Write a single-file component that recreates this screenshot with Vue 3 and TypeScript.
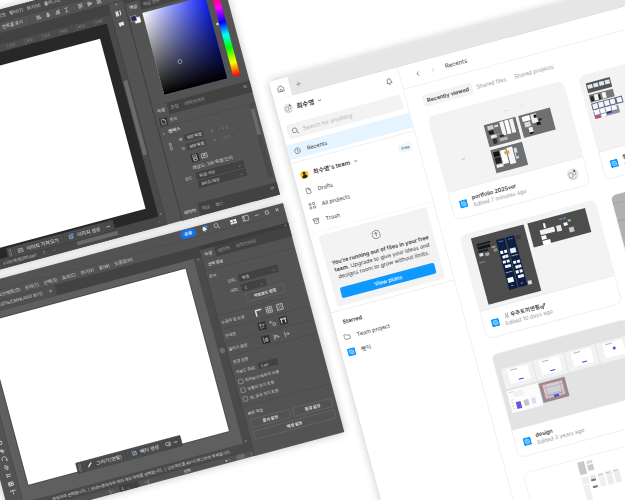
<script setup lang="ts">
import { ref } from 'vue'

interface Rect { x: number; y: number; w: number; h: number; f: string }
interface FileCard { title: string; edited: string; kind: string; bg: string; avatar: boolean }

const r = (x: number, y: number, w: number, h: number, f: string): Rect => ({ x, y, w, h, f })

const psMenus = ['선택(S)', '필터(T)', '보기(V)', '플러그인', '창(W)', '도움말(H)']
const aiMenus = ['오브젝트(O)', '문자(T)', '선택(S)', '효과(C)', '보기(V)', '창(W)', '도움말(H)']
const rulerMarks = [250, 300, 350, 400, 450, 500]
const alignIcons = ['M2 1v10M4 3h4v2H4zM4 7h6v2H4z', 'M6 1v10M4 3h4v2H4zM3 7h6v2H3z', 'M10 1v10M5 3h4v2H5zM3 7h6v2H3z', 'M3 2h6M6 2v8M3 10h6', 'M1 2h10M3 4v6h2V4zM7 4v4h2V4z', 'M1 6h10M3 2v8h2V2zM7 4v4h2V4z', 'M1 10h10M3 2v6h2V2zM7 4v4h2V4z']
const checks = ['미리보기 테두리 사용', '모퉁이 크기 조정', '선, 효과 크기 조정']
const tools = [
  'M3 3h6v6H3z', 'M2 10l8-8M7 2h3v3', 'M3 9c2-6 4 2 6-5', 'M3 4h6v5H3zM5 2h2v2', 'M2 6h8M6 2v8M3 3l6 6',
  'M3 8a4 4 0 1 1 6 0M8 8h3v2', 'M4 2l5 3-2 5-4-3zM5 6h3', 'M2 4h8M4 7h5M3 2v7', 'M2 3h8v6H2zM4 3v6M2 6h8M7 3v6', 'M2 3h8M6 3v7M2 3v2M10 3v2',
]
const unit = ref('픽셀')
const query = ref('')

const files: FileCard[] = [
  { title: 'portfolio 2025ver', edited: 'Edited 7 minutes ago', kind: 'portfolio', bg: '#f3f3f3', avatar: true },
  { title: '원페이지', edited: 'Edited 2 days ago', kind: 'boards', bg: '#f3f3f3', avatar: false },
  { title: '🐰우주토끼연필🚀', edited: 'Edited 10 days ago', kind: 'space', bg: '#f3f3f3', avatar: false },
  { title: 'wireframe', edited: 'Edited 1 year ago', kind: 'grey', bg: '#b1b1b1', avatar: false },
  { title: 'design', edited: 'Edited 3 years ago', kind: 'design', bg: '#e3e3e3', avatar: false },
  { title: 'archive', edited: 'Edited 3 years ago', kind: 'blank', bg: '#e3e3e3', avatar: false },
  { title: 'draft', edited: 'Edited 3 years ago', kind: 'draft', bg: '#ffffff', avatar: false },
]

const spaceRects: Rect[] = [
  r(10, 5, 55, 69, '#4d4d4d'), r(69, 5, 60, 25, '#4d4d4d'),
  r(34, 13, 9, 52, '#0c1f42'), r(44, 13, 9, 52, '#0c1f42'), r(54, 14, 5, 4, '#3b3b3b'),
  r(14, 12, 14, 2, '#1b1b1b'), r(14, 15, 13, 3, '#151515'), r(14, 19, 10, 2, '#202020'), r(14, 22, 4, 3, '#cfe0f5'), r(20, 23, 4, 3, '#aaaaaa'),
  r(28, 18, 4, 2, '#b8977d'), r(29, 21, 4, 3, '#8a8a8a'), r(12, 30, 6, 2, '#6d6d6d'),
  ...[25, 30, 35, 40].flatMap((y, i) => [r(35 + (i % 2), y, 3, 3, '#fff'), r(39, y, 3, 3, '#eef3fb')]),
  r(45, 25, 6, 5, '#e8edf5'), r(45, 32, 7, 1, '#8b9abb'), r(35, 47, 7, 1, '#8b9abb'),
  ...[38, 43, 48, 53].flatMap((y, i) => [r(45 + (i % 2), y, 3, 3, '#fff'), r(49, y, 3, 3, '#eef3fb')]),
  r(35, 53, 6, 5, '#fff'), r(37, 61, 2, 1, '#8b9abb'), r(47, 61, 2, 1, '#8b9abb'), r(36, 15, 5, 1, '#5b72a5'), r(46, 15, 5, 1, '#5b72a5'),
  r(54, 61, 4, 4, '#d9d9d9'),
  r(84, 9, 2, 5, '#fff'), r(79, 15, 15, 5, '#f1f1f1'), r(79, 21, 5, 4, '#fff'), r(79, 26, 8, 5, '#fff'), r(96, 15, 5, 6, '#e8e8e8'),
  r(101, 9, 3, 1, '#63a4e8'), r(105, 9, 3, 1, '#63a4e8'), r(104, 14, 4, 3, '#fff'), r(109, 12, 3, 2, '#a9bf9b'), r(108, 20, 5, 5, '#c9c9c9'),
]

const portfolioRects: Rect[] = [
  r(52, 22, 33, 23, '#707070'), r(88, 22, 33, 23, '#707070'), r(52, 48, 33, 24, '#707070'),
  r(55, 24, 6, 4, '#cfcfcf'), r(55, 29, 5, 4, '#1e1e1e'), r(56, 34, 6, 3, '#e9e9e9'), r(57, 38, 4, 5, '#2d2d2d'), r(62, 25, 4, 2, '#dddddd'),
  r(68, 23, 4, 14, '#f4f4f4'), r(73, 23, 4, 14, '#ffffff'), r(78, 23, 4, 14, '#f4f4f4'), r(65, 36, 4, 2, '#2b2b2b'), r(64, 39, 8, 3, '#b9b9b9'),
  r(91, 24, 8, 5, '#ffffff'), r(92, 30, 6, 5, '#dcdcdc'), r(100, 24, 6, 9, '#efefef'), r(103, 25, 3, 3, '#191919'), r(104, 33, 4, 3, '#111111'),
  r(95, 36, 4, 7, '#f0f0f0'), r(95, 41, 4, 2, '#161616'), r(107, 30, 3, 2, '#222222'), r(62, 34, 3, 1, '#69b7ef'),
  r(54, 51, 6, 5, '#121212'), r(54, 57, 6, 6, '#202020'), r(54, 64, 7, 3, '#efefef'), r(61, 51, 6, 14, '#ffffff'), r(68, 50, 6, 17, '#f7f7f7'), r(65, 53, 5, 3, '#d5a52b'), r(75, 52, 3, 11, '#dedede'), r(76, 57, 2, 4, '#3679ad'),
  r(76, 13, 3, 1, '#f0c8cf'), r(93, 12, 3, 1, '#d8d8d8'), r(22, 49, 3, 1, '#aaa6f5'),
]

const boardRects: Rect[] = [
  r(5, 8, 25, 10, '#555555'), r(5, 20, 25, 8, '#777777'), r(5, 29, 32, 7, '#63697a'), r(5, 37, 26, 8, '#8a8fa0'),
  ...[6, 12, 18, 24].map((x) => r(x, 10, 5, 4, '#dcecf3')),
  ...[6, 13].map((x) => r(x, 22, 3, 5, '#222')), ...[10, 18].map((x) => r(x, 21, 4, 6, '#f5f5f5')),
  ...[6, 12, 18, 24, 31].map((x) => r(x, 30, 5, 5, '#f3f6fc')),
  ...[6, 12, 18, 24].map((x) => r(x, 37, 5, 4, '#ffffff')), r(6, 42, 5, 3, '#c54b63'), r(12, 42, 5, 3, '#ffffff'), r(18, 41, 5, 2, '#22399a'),
]

const draftRects: Rect[] = [
  r(55, 3, 7, 13, '#c9c9c9'), r(64, 4, 6, 3, '#d9d9d9'), r(64, 8, 6, 6, '#cccccc'),
  r(55, 19, 7, 7, '#eeeeee'), r(64, 19, 5, 4, '#e5e5e5'), r(64, 23, 5, 2, '#777777'), r(64, 30, 5, 2, '#777777'),
  r(55, 27, 6, 24, '#efefef'), r(72, 19, 6, 14, '#f0f0f0'), r(80, 19, 6, 14, '#ececec'), r(88, 19, 6, 14, '#ececec'),
  r(72, 20, 5, 1, '#c4c4c4'), r(80, 20, 4, 1, '#c4c4c4'), r(88, 20, 4, 1, '#c4c4c4'),
]
const rectsOf: Record<string, Rect[]> = {
  portfolio: portfolioRects, boards: boardRects, space: spaceRects, draft: draftRects,
  grey: [r(0, 8, 140, 1, '#a3a3a3'), r(0, 26, 140, 1, '#9c9c9c')], blank: [],
}
const tiles = [5, 38, 71, 104]
</script>

<template>
  <main class="stage">
    <!-- photo editor -->
    <section class="win ps" aria-label="Photo editor">
      <nav class="ps-menu"><a v-for="m in psMenus" :key="m" href="#">{{ m }}</a></nav>
      <div class="ps-options">
        <span>컨트롤 표시</span><i class="vr"></i>
        <button v-for="(d, i) in alignIcons" :key="i" class="ic" :class="{ gap: i === 4 }" aria-label="정렬"><svg viewBox="0 0 12 12"><path :d="d" /></svg></button>
      </div>
      <div class="ps-body">
        <div class="ps-left">
          <div class="ps-strip"></div>
          <div class="ruler"><span v-for="n in rulerMarks" :key="n">{{ n }}</span></div>
          <div class="ps-work">
            <div class="ps-dark">
              <div class="sheet"></div>
              <div class="ctx ps-ctx">
                <i class="grip"></i>
                <button><svg viewBox="0 0 12 12"><path d="M1 3h10v7H1zM3 8l2-3 2 2 1-1 2 2" /></svg>이미지 가져오기</button>
                <button><svg viewBox="0 0 12 12"><path d="M2 3h7v7H2zM4 8l2-2 2 2" /><circle class="blue" cx="9" cy="3" r="3" /></svg>이미지 생성</button>
                <b>•••</b>
              </div>
            </div>
            <div class="ps-scroll"><i></i><em>⌄</em></div>
          </div>
          <div class="ps-status"><span>x 500 픽셀(300 ppi)</span><span>〉</span><span>‹</span><i></i><span class="end">›</span></div>
        </div>
        <div class="ps-icons">
          <em>«</em>
          <svg viewBox="0 0 14 14"><path d="M2 3h4v3H2zM2 8h4v3H2zM9 3c3 1 3 6 0 8M9 3h3" /></svg>
          <svg viewBox="0 0 14 14"><path class="solid" d="M2 3h10v7H6l-3 2v-2H2z" /></svg>
        </div>
        <aside class="ps-panel">
          <div class="ps-gap"></div>
          <div class="tabs"><button class="on">색상</button><button>색상 견본</button></div>
          <div class="color">
            <svg class="swatch" viewBox="0 0 20 18"><rect x="8" y="6" width="11" height="11" fill="#fff" /><rect x="1" y="1" width="11" height="11" fill="#262a58" stroke="#c7c7c7" /></svg>
            <div class="field"><i></i></div>
            <div class="hue"><i></i></div>
          </div>
          <div class="tabs tall"><button class="on">속성</button><button>조정</button><button>라이브러리</button><em>≡</em></div>
          <div class="props">
            <p class="doc"><svg viewBox="0 0 16 16"><rect width="16" height="16" fill="#303030" stroke="none" /><path d="M4 3h5l3 3v7H4zM9 3v3h3" /></svg>문서</p>
            <p class="canvas-h"><em>⌄</em><b>캔버스</b></p>
            <div class="size">
              <svg viewBox="0 0 10 18"><path d="M3 7V4a2 2 0 0 1 4 0v3M3 11v3a2 2 0 0 0 4 0v-3M5 6v6" /></svg>
              <label>W <input value="500 픽셀" /></label><label class="dim">X <input value="0 픽셀" disabled /></label>
              <label>H <input value="500 픽셀" /></label><label class="dim">Y <input value="0 픽셀" disabled /></label>
            </div>
            <div class="orient">
              <button class="on" aria-label="세로"><svg viewBox="0 0 12 12"><path d="M3 1h6v10H3zM4 9a2 2 0 0 1 4 0" /><circle cx="6" cy="5" r="1" /></svg></button>
              <button aria-label="가로"><svg viewBox="0 0 12 12"><path d="M1 3h10v7H1zM4 8a2 2 0 0 1 4 0" /><circle cx="6" cy="5" r="1" /></svg></button>
            </div>
            <p class="res">해상도: 300 픽셀/인치</p>
            <label class="mode">모드 <span class="pick"><select><option>RGB 색상</option></select><em>⌄</em></span></label>
            <label class="mode"><span class="pick"><select aria-label="비트"><option>8비트/채널</option></select><em>⌄</em></span></label>
            <div class="vbar"><i></i></div>
          </div>
          <div class="tabs foot"><button class="on">레이어</button><button>채널</button><button>패스</button><em>≡</em></div>
        </aside>
      </div>
    </section>

    <!-- vector editor -->
    <section class="win ai" aria-label="Vector editor">
      <header class="ai-title">
        <button class="share">공유</button>
        <svg viewBox="0 0 14 14"><path class="solid" d="M3 10V6a4 4 0 0 1 8 0v4zM6 11h2v1H6z" /><circle class="blue" cx="11" cy="3" r="3" /></svg>
        <svg viewBox="0 0 14 14"><circle cx="6" cy="6" r="4" /><path d="M9 9l4 4" /></svg>
        <svg class="sep" viewBox="0 0 14 14"><path class="solid" d="M0 3h6v4H0zM7 3h6v4H7zM0 8h6v4H0zM7 8h6v4H7z" /></svg>
        <svg viewBox="0 0 14 14"><path d="M1 2h12v10H1zM4 2v10M1 5h3" /></svg>
        <svg class="s" viewBox="0 0 10 10"><path d="M1 5h8" /></svg><svg class="s" viewBox="0 0 10 10"><path d="M2 2h6v6H2z" /></svg><svg class="s" viewBox="0 0 10 10"><path d="M2 2l6 6M8 2l-6 6" /></svg>
      </header>
      <nav class="ai-menu"><a v-for="m in aiMenus" :key="m" href="#">{{ m }}</a></nav>
      <div class="ai-body">
        <div class="ai-left">
          <div class="ai-tabs"><span>66.67%(CMYK/미리 보기) <em>×</em></span></div>
          <div class="ai-work">
            <div class="tools"><button v-for="(d, i) in tools" :key="i" aria-label="도구"><svg viewBox="0 0 12 12"><path :d="d" /></svg></button></div>
            <div class="ai-canvas">
              <div class="sheet"></div>
              <div class="ctx ai-ctx">
                <i class="grip"></i>
                <button><svg viewBox="0 0 12 12"><path class="solid" d="M1 11l1-4 6-6 2 2-6 6z" /></svg>그리기(연필)</button>
                <button><svg viewBox="0 0 12 12"><path d="M3 3h7v7H3zM5 8l4-4" /><circle class="blue" cx="3" cy="3" r="2" /></svg>벡터 생성</button>
                <svg viewBox="0 0 12 12"><path d="M1 3h10v5H1zM4 10h7M7 6h4" /></svg>
                <b>•••</b>
              </div>
            </div>
            <div class="ai-scroll"><em>⌃</em><i></i><em>⌄</em></div>
          </div>
          <div class="hint">클릭하여 선택합니다. &nbsp;|&nbsp; Shift+클릭하여 여러 개의 개체를 선택합니다. &nbsp;|&nbsp; 오브젝트를 Alt+드래그하여 복제합니다.</div>
          <div class="ai-status"><span>|‹ ‹</span><span class="page">1 &nbsp; ⌄</span><span>› ›|</span><span class="sel">선택</span><span>▸ &nbsp;‹</span><i></i><span>›</span></div>
        </div>
        <aside class="ai-panel">
          <div class="ai-gap">«</div>
          <div class="tabs"><button class="on">속성</button><button>레이어</button><button>라이브러리</button></div>
          <p class="none">선택 없음</p>
          <div class="sec docsec">
            <p>문서</p>
            <label><span>단위:</span><span class="pick"><select v-model="unit"><option>픽셀</option></select><em>⌄</em></span></label>
            <label><span>대지:</span><span class="pick short"><select><option>1</option></select><em>⌄</em></span><em class="nav">‹ &nbsp; ›</em></label>
            <button class="outline">아트보드 편집</button>
          </div>
          <div class="sec row"><span>눈금자 및 눈금</span>
            <svg viewBox="0 0 16 16"><path class="thick" d="M3 15V3h12" /></svg><svg viewBox="0 0 16 16"><path d="M2 2h12v12H2zM6 2v12M10 2v12M2 6h12M2 10h12" /></svg><svg viewBox="0 0 16 16"><path d="M2 2h12v12H2zM2 8l6-6M2 14L14 2M8 14l6-6" /></svg></div>
          <div class="sec row"><span>안내선</span>
            <svg class="dk" viewBox="0 0 16 16"><path d="M5 2v12M2 5h12M8 8h4M8 11h4" /></svg><svg viewBox="0 0 16 16"><path d="M4 2v6M2 5h6M8 8h5v5H8z" /></svg><svg class="dk" viewBox="0 0 16 16"><path class="mid" d="M4 13V5h8v8M2 4h4M10 4h4" /></svg></div>
          <div class="sec row"><span>물리기 옵션</span>
            <svg class="dk" viewBox="0 0 16 16"><path d="M4 2v12M7 6h5v5H7zM10 4v9" /></svg><svg viewBox="0 0 16 16"><path d="M4 2v12M6 5h4v4H6zM11 7l3 2-3 2" /></svg><svg viewBox="0 0 16 16"><path d="M4 2v12M4 8h9M9 5l3 3-3 3" /></svg></div>
          <div class="sec pref">
            <p>환경 설정</p>
            <label class="step">키보드 증감: <input value="1 px" /></label>
            <label v-for="c in checks" :key="c" class="chk"><input type="checkbox" />{{ c }}</label>
          </div>
          <div class="sec quick">
            <p>빠른 작업</p>
            <div><button class="outline">문서 설정</button><button class="outline">환경 설정</button></div>
            <button class="outline">에셋 설정</button>
          </div>
        </aside>
      </div>
    </section>

    <!-- file browser -->
    <section class="win fg" aria-label="Files">
      <div class="fg-tabs">
        <button class="home" aria-label="Home"><svg viewBox="0 0 16 16"><path d="M2 7l6-5 6 5v6a1 1 0 0 1-1 1H3a1 1 0 0 1-1-1zM6 14v-3a2 2 0 0 1 4 0v3" /></svg></button>
        <button class="plus" aria-label="New tab"><svg viewBox="0 0 12 12"><path d="M6 1v10M1 6h10" /></svg></button>
      </div>
      <div class="fg-body">
        <aside class="side">
          <div class="user">
            <svg class="av" viewBox="0 0 20 20"><circle cx="10" cy="10" r="10" fill="#e9e8e6" /><path d="M4 7h5v7H4zM11 6h4v5h-4z" fill="#fff" stroke="#8a8d93" /><path d="M13 3l2 3" stroke="#36444f" stroke-width="2" /><path d="M5 16q5 3 10 0" fill="none" stroke="#d9ab7c" /></svg>
            <b>최수영</b><svg class="chev" viewBox="0 0 8 8"><path d="M1 3l3 3 3-3" /></svg>
            <button class="bell" aria-label="Notifications"><svg viewBox="0 0 16 16"><path d="M3 11l1.500-2V6a3.500 3.500 0 0 1 7 0v3l1.500 2zM6.500 13.500h3" /></svg></button>
          </div>
          <label class="search"><svg viewBox="0 0 16 16"><circle cx="7" cy="7" r="5" /><path d="M11 11l4 4" /></svg><input v-model="query" placeholder="Search for anything" aria-label="Search" /></label>
          <a href="#" class="row on"><svg viewBox="0 0 16 16"><circle cx="8" cy="8" r="6" /><path d="M8 4v4l3 2" /></svg>Recents</a>
          <hr />
          <div class="team"><svg viewBox="0 0 18 18"><circle cx="9" cy="9" r="9" fill="#ffc61a" /><circle cx="9" cy="6" r="3" fill="#222" /><path d="M3 14q1-5 6-5t6 5q-6 5-12 0z" fill="#222" /></svg><b>최수영's team</b><svg class="chev" viewBox="0 0 8 8"><path d="M1 3l3 3 3-3" /></svg><span>Free</span></div>
          <a href="#" class="row"><svg viewBox="0 0 16 16"><path d="M4 2h5l4 4v8H4zM9 2v4h4" /></svg>Drafts</a>
          <a href="#" class="row"><svg viewBox="0 0 16 16"><path d="M2 2h4v4H2zM10 2h4v4h-4zM2 10h4v4H2zM10 10h4v4h-4z" /></svg>All projects</a>
          <a href="#" class="row"><svg viewBox="0 0 16 16"><path d="M2 3h12v3H2zM3 6l1 8h8l1-8M6 9h4" /></svg>Trash</a>
          <hr />
          <div class="upsell">
            <svg viewBox="0 0 18 18"><circle cx="9" cy="9" r="8" /><path d="M9 13V5M6 8l3-3 3 3" /></svg>
            <p><b>You’re running out of files in your free<br />team.</b> Upgrade to give your ideas and<br />designs room to grow without limits.</p>
            <button>View plans</button>
          </div>
          <hr />
          <p class="row starred">Starred</p>
          <a href="#" class="row"><svg viewBox="0 0 16 16"><path d="M1 4a1 1 0 0 1 1-1h4l2 2h5a1 1 0 0 1 1 1v6a1 1 0 0 1-1 1H3a1 1 0 0 1-1-1z" /></svg>Team project</a>
          <a href="#" class="row"><svg class="fi" viewBox="0 0 16 16"><rect width="16" height="16" rx="2" /><path d="M4 4h5a3 3 0 0 1 3 3v5H7a3 3 0 0 1-3-3z" /><circle cx="8" cy="8" r="2" /></svg>펫틱</a>
        </aside>
        <div class="content">
          <header><svg viewBox="0 0 12 12"><path d="M8 2L4 6l4 4" /></svg><svg class="off" viewBox="0 0 12 12"><path d="M4 2l4 4-4 4" /></svg><h1>Recents</h1></header>
          <nav class="views"><button class="on">Recently viewed</button><button>Shared files</button><button>Shared projects</button></nav>
          <div class="grid">
            <article v-for="f in files" :key="f.title">
              <svg class="thumb" viewBox="0 0 140 78" preserveAspectRatio="none" :style="{ background: f.bg }">
                <template v-if="f.kind === 'design'">
                  <g v-for="(t, i) in tiles" :key="t">
                    <rect :x="t" y="16" width="32" height="21" fill="#f0f2f3" /><rect :x="t + 6" y="18" width="21" height="15" rx="1" fill="#fff" />
                    <rect :x="t + 9" y="19" width="7" height="1" fill="#b8b4cf" /><rect v-if="i < 3" :x="t + 15" y="30" width="5" height="1" fill="#5a35d6" /><circle v-else :cx="t + 17" cy="25" r="1.500" fill="#7242e8" />
                  </g>
                  <rect x="5" y="39" width="32" height="23" fill="#fcfcfd" />
                  <path d="M7 41h4M7 49h2M7 52h2M7 55h2M7 58h2" stroke="#bbb" stroke-width=".6" />
                  <rect x="11" y="41" width="10" height="6" fill="#f2f2f2" /><rect x="11" y="52" width="5" height="7" fill="#7053dc" /><rect x="19" y="52" width="5" height="6" fill="#c3c3c8" /><rect x="27" y="52" width="4" height="6" fill="#ded8fa" />
                  <rect x="38" y="40" width="27" height="20" fill="#8d8d92" /><rect x="41" y="42" width="21" height="15" fill="#ccd0d8" stroke="#c98080" />
                  <path d="M40 46h23M40 53h23M44 41v18M59 41v18" stroke="#dc8a8a" stroke-width=".5" /><rect x="44" y="54" width="15" height="1" fill="#65a9d7" /><rect x="50" y="55" width="5" height="2" fill="#6237d4" />
                </template>
                <template v-else>
                  <rect v-for="(q, i) in rectsOf[f.kind]" :key="i" :x="q.x" :y="q.y" :width="q.w" :height="q.h" :fill="q.f" />
                </template>
              </svg>
              <footer>
                <svg class="fi" viewBox="0 0 16 16"><rect width="16" height="16" rx="2" /><path d="M4 4h5a3 3 0 0 1 3 3v5H7a3 3 0 0 1-3-3z" /><circle cx="8" cy="8" r="2" /></svg>
                <div><h2>{{ f.title }}</h2><p>{{ f.edited }}</p></div>
                <svg v-if="f.avatar" class="av" viewBox="0 0 20 20"><circle cx="10" cy="10" r="10" fill="#e9e8e6" /><path d="M4 7h5v7H4zM11 6h4v5h-4z" fill="#fff" stroke="#8a8d93" /><path d="M13 3l2 3" stroke="#36444f" stroke-width="2" /><path d="M5 16q5 3 10 0" fill="none" stroke="#d9ab7c" /></svg>
              </footer>
            </article>
          </div>
        </div>
      </div>
    </section>
  </main>
</template>

<style>
body { background: #fff; }
</style>

<style scoped>
* { box-sizing: border-box; }
.stage { position: relative; width: 100%; height: 100vh; overflow: hidden; background: #fff; }
p, h1, h2 { margin: 0; font-weight: 400; }
em { font-style: normal; }
a { color: inherit; text-decoration: none; }
button, input, select { font: inherit; color: inherit; border: 0; background: none; padding: 0; margin: 0; }
select { appearance: none; }
svg { flex: none; display: block; fill: none; stroke: currentColor; }
.solid { fill: currentColor; stroke: none; }
.blue { fill: #2d8cf5; stroke: none; }
.thick { stroke-width: 3; }
.mid { stroke-width: 2; }

/* windows lie on a tilted free canvas at half scale */
.win { position: absolute; display: flex; flex-direction: column; box-shadow: 0 0 18px rgba(0, 0, 0, .24); white-space: nowrap; }
.ps, .ai { font: 9px/12px "Noto Sans CJK KR", sans-serif; color: #dcdcdc; background: #535353; transform-origin: 100% 0; transform: rotate(-15deg) scale(.5); }
.ps { width: 640px; height: 502px; left: -425px; top: -48px; }
.ai { width: 690px; height: 474px; left: -407px; top: 203px; }
.fg { width: 1040px; height: 1240px; left: 269px; top: 82px; transform-origin: 0 0; transform: rotate(-15deg) scale(.5); font: 11px/14px Inter, "Noto Sans CJK KR", sans-serif; color: #3a3a3a; background: #fff; }

.tabs { display: flex; align-items: stretch; height: 20px; background: #424242; font-size: 9px; color: #a5a5a5; }
.tabs button { padding: 0 6px; }
.tabs .on { background: #535353; color: #eee; }
.tabs em { margin-left: auto; padding: 4px 7px; color: #ccc; }
.pick { display: flex; align-items: center; height: 14px; padding: 0 5px; background: #424242; border: 1px solid #3c3c3c; }
.pick select { flex: 1; min-width: 0; }
.pick em { line-height: 8px; }
.sheet { background: #fff; }
.ctx { position: absolute; display: flex; align-items: center; gap: 6px; height: 22px; padding: 0 8px 0 4px; background: #484848; border: 1px solid #3a3a3a; border-radius: 2px; color: #e4e4e4; font-size: 10px; }
.ctx button { display: flex; align-items: center; gap: 6px; height: 18px; padding: 0 6px; border: 1px solid #5a5a5a; border-radius: 3px; }
.ctx svg { width: 12px; height: 12px; }
.ctx b { font-size: 6px; }
.grip { width: 4px; height: 16px; border: solid #999; border-width: 0 1px; }

/* photo editor */
.ps-menu { display: flex; justify-content: flex-end; align-items: center; gap: 8px; height: 24px; padding-right: 248px; background: #4a4a4a; }
.ps-options { display: flex; justify-content: flex-end; align-items: center; gap: 7px; height: 22px; padding-right: 244px; border-top: 1px solid #3d3d3d; border-bottom: 1px solid #3d3d3d; }
.ps-options > span { margin-right: 6px; }
.ic svg { width: 12px; height: 12px; }
.ic.gap { margin-left: 10px; }
.vr { width: 1px; height: 16px; background: #424242; margin-right: 6px; }
.ps-body { display: flex; flex: 1; min-height: 0; }
.ps-left { display: flex; flex-direction: column; flex: 1; min-width: 0; }
.ps-strip { height: 22px; background: #424242; }
.ruler { display: flex; justify-content: flex-end; height: 14px; background: #4b4b4b; font-size: 8px; color: #8f8f8f; }
.ruler span { width: 36px; border-left: 1px solid #707070; padding-left: 2px; }
.ps-work { display: flex; flex: 1; }
.ps-dark { position: relative; display: flex; flex: 1; padding: 26px 21px 22px 40px; background: #282828; }
.ps-dark .sheet { flex: 1; }
.ps-ctx { right: 90px; bottom: -4px; }
.ps-scroll { display: flex; flex-direction: column; justify-content: space-between; align-items: center; width: 12px; padding-top: 120px; background: #4a4a4a; }
.ps-scroll i { width: 8px; height: 154px; margin-bottom: auto; background: #6b6b6b; }
.ps-status { display: flex; align-items: center; gap: 14px; height: 20px; padding: 0 12px 0 70px; background: #484848; font-size: 8px; color: #c8c8c8; }
.ps-status i { width: 84px; height: 8px; margin-left: 32px; background: #696969; }
.ps-status .end { margin-left: auto; }
.ps-icons { display: flex; flex-direction: column; align-items: center; gap: 8px; width: 32px; border: solid #3c3c3c; border-width: 0 1px; }
.ps-icons em { line-height: 8px; }
.ps-icons svg { width: 14px; height: 14px; stroke-width: 2; color: #e4e4e4; }
.ps-panel { display: flex; flex-direction: column; width: 202px; border-left: 1px solid #3c3c3c; }
.ps-gap { height: 8px; background: #424242; }
.color { display: flex; align-items: flex-start; height: 192px; padding: 6px 15px 0 3px; }
.swatch { width: 20px; height: 18px; margin-right: 6px; }
.field { position: relative; flex: 1; height: 170px; background: linear-gradient(to top, #000, transparent), linear-gradient(to right, #fff, #1024ff); }
.field i { position: absolute; left: 33%; top: 64%; width: 9px; height: 9px; border: 1px solid #ddd; border-radius: 50%; }
.hue { position: relative; width: 14px; height: 170px; margin-left: 13px; background: linear-gradient(#f00, #f0f 17%, #00f 35%, #0ff 50%, #0f0 66%, #ff0 84%, #f00); }
.hue i { position: absolute; left: -6px; top: 58px; width: 5px; height: 5px; border-radius: 50%; background: #ddd; }
.tabs.tall { height: 24px; }
.props { position: relative; flex: 1; font-size: 8px; }
.doc { display: flex; align-items: center; gap: 5px; height: 22px; padding-left: 6px; border-bottom: 1px solid #464646; }
.doc svg { width: 16px; height: 16px; }
.canvas-h { display: flex; gap: 6px; align-items: center; height: 22px; padding-left: 4px; font-size: 9px; }
.size { display: grid; grid-template-columns: 12px 56px 58px; column-gap: 6px; padding-left: 10px; }
.size svg { grid-row: 1 / 3; align-self: center; width: 10px; height: 18px; }
.size label { display: flex; align-items: center; justify-content: flex-end; gap: 5px; height: 19px; }
.size input { width: 38px; height: 13px; padding-left: 4px; background: #424242; border: 1px solid #484848; color: #eee; }
.size .dim { color: #9a9a9a; }
.size .dim input { background: #505050; color: #777; border-color: #5b5b5b; }
.orient { display: flex; gap: 3px; padding: 7px 0 0 48px; }
.orient button { padding: 1px; }
.orient svg { width: 14px; height: 14px; stroke-width: 1; }
.orient .on { background: #2f2f2f; }
.res { padding: 5px 0 3px 46px; font-size: 9px; }
.mode { display: flex; justify-content: flex-end; align-items: center; gap: 9px; height: 17px; padding-right: 54px; }
.mode .pick { width: 98px; }
.vbar { position: absolute; top: 22px; right: 4px; bottom: 12px; width: 10px; background: #4a4a4a; }
.vbar i { display: block; width: 8px; height: 54px; margin: 10px 1px; background: #696969; }
.tabs.foot { height: 26px; }

/* vector editor */
.ai-title { display: flex; align-items: center; justify-content: flex-end; gap: 11px; height: 20px; padding-right: 10px; color: #eee; }
.ai-title svg { width: 14px; height: 14px; stroke-width: 1; }
.ai-title .s { width: 10px; height: 10px; }
.ai-title .sep { margin-left: 10px; }
.share { width: 32px; height: 18px; border-radius: 9px; background: #1473e6; font-weight: 700; line-height: 16px; }
.ai-menu { display: flex; align-items: center; justify-content: flex-end; gap: 10px; height: 20px; padding-right: 320px; border-top: 1px solid #474747; }
.ai-body { display: flex; flex: 1; min-height: 0; }
.ai-left { display: flex; flex-direction: column; flex: 1; min-width: 0; }
.ai-tabs { display: flex; height: 22px; background: #424242; }
.ai-tabs span { display: flex; justify-content: flex-end; gap: 12px; width: 206px; padding: 4px 6px 0 0; background: #4f4f4f; }
.ai-work { display: flex; flex: 1; }
.tools { display: flex; flex-direction: column; justify-content: flex-end; align-items: center; gap: 3px; width: 34px; padding: 0 0 18px 4px; border-right: 1px solid #404040; }
.tools svg { width: 14px; height: 14px; stroke-width: 1; color: #eee; }
.ai-canvas { position: relative; display: flex; flex: 1; padding: 14px 20px 31px 18px; background: #5f5f5f; }
.ai-canvas .sheet { flex: 1; outline: 1px solid #333; }
.ai-ctx { right: 117px; bottom: 27px; }
.ai-scroll { display: flex; flex-direction: column; justify-content: space-between; align-items: center; width: 16px; background: #4a4a4a; }
.ai-scroll i { width: 11px; height: 11px; border-radius: 50%; background: #6b6b6b; }
.hint { display: flex; justify-content: flex-end; align-items: center; height: 17px; padding-right: 44px; font-size: 8px; background: #4a4a4a; }
.ai-status { display: flex; align-items: center; justify-content: flex-end; gap: 12px; height: 13px; padding-right: 4px; font-size: 8px; border-top: 1px solid #404040; }
.ai-status .page { width: 40px; padding-left: 4px; background: #404040; }
.ai-status .sel { margin: 0 60px; }
.ai-status i { width: 18px; height: 10px; border-radius: 5px; background: #6b6b6b; }
.ai-panel { display: flex; flex-direction: column; width: 186px; border-left: 1px solid #3c3c3c; font-size: 8px; }
.ai-gap { height: 9px; padding-right: 5px; text-align: right; line-height: 8px; background: #3c3c3c; }
.none { height: 22px; padding: 5px 8px 0; font-weight: 500; }
.sec { margin: 0 4px; border-top: 1px solid #454545; }
.docsec { display: flex; flex-direction: column; gap: 5px; height: 93px; padding-top: 6px; }
.docsec label { display: flex; align-items: center; gap: 6px; height: 15px; padding-left: 34px; }
.docsec .pick { width: 80px; }
.docsec .pick.short { width: 50px; }
.docsec .nav { margin-left: 8px; color: #888; }
.outline { height: 18px; border: 1px solid #6e6e6e; font-weight: 700; line-height: 14px; color: #e6e6e6; }
.docsec .outline { width: 80px; margin-left: 60px; }
.sec.row { display: flex; align-items: center; gap: 6px; height: 28px; }
.row span { width: 63px; }
.ai-panel .row svg { width: 16px; height: 16px; stroke-width: 1; }
.dk { background: #2f2f2f; }
.pref { display: flex; flex-direction: column; gap: 6px; height: 105px; padding: 7px 2px 0; }
.step { display: flex; align-items: center; gap: 6px; margin: 2px 0; }
.step input { width: 40px; height: 13px; padding-left: 5px; background: #424242; }
.chk { display: flex; align-items: center; gap: 4px; }
.chk input { appearance: none; width: 10px; height: 10px; border: 1px solid #bbb; border-radius: 2px; }
.quick { display: flex; flex-direction: column; gap: 6px; padding: 9px 4px 0 4px; }
.quick div { display: flex; gap: 6px; }
.quick div .outline { flex: 1; }

/* file browser */
.fg { border-radius: 3px; }
.fg-tabs { display: flex; height: 38px; background: #e6e6e6; border-bottom: 1px solid #dcdcdc; }
.home { display: grid; place-items: center; width: 38px; height: 38px; background: #fff; }
.home svg { width: 16px; height: 16px; }
.plus { width: 36px; display: grid; place-items: center; color: #777; }
.plus svg { width: 12px; height: 12px; }
.fg-body { display: flex; flex: 1; }
.side { width: 256px; border-right: 1px solid #e4e4e4; }
.side hr { margin: 7px 0; border: 0; border-top: 1px solid #e2e2e2; }
.user { display: flex; align-items: center; gap: 7px; height: 46px; padding: 0 14px; font-size: 13px; }
.av { width: 20px; height: 20px; stroke: none; }
.chev { width: 8px; height: 8px; }
.bell { margin-left: auto; }
.bell svg { width: 17px; height: 17px; }
.search { display: flex; align-items: center; gap: 8px; height: 30px; margin: 8px 8px 10px 10px; padding: 0 8px; border-radius: 5px; background: #f3f3f3; }
.search svg { width: 15px; height: 15px; }
.search input { flex: 1; outline: 0; }
.search input::placeholder { color: #b3b3b3; opacity: 1; }
.side .row { display: flex; align-items: center; gap: 12px; height: 31px; padding-left: 12px; }
.side .row svg { width: 15px; height: 15px; }
.side .row.on { height: 30px; background: #e5f4ff; }
.side .row.starred { padding-left: 18px; font-weight: 600; }
.team { display: flex; align-items: center; gap: 8px; height: 38px; padding: 2px 12px 0; font-size: 12px; }
.team > svg:first-child { width: 17px; height: 17px; margin-right: 2px; stroke: none; }
.team b { font-weight: 600; }
.team span { margin-left: auto; padding: 2px 5px; border-radius: 3px; background: #edf7fc; font-size: 8px; font-weight: 500; line-height: 12px; color: #356077; }
.upsell { display: flex; flex-direction: column; align-items: center; margin: 0 16px 8px; padding: 18px 14px 14px; border-radius: 5px; background: #f3f3f3; }
.upsell svg { width: 18px; height: 18px; }
.upsell p { margin: 16px 0 14px; line-height: 15px; text-align: center; }
.upsell b { font-weight: 600; }
.upsell button { width: 100%; height: 22px; border-radius: 4px; background: #0d99ff; color: #fff; font-weight: 500; }
.side .row .fi, .fi { width: 16px; height: 16px; stroke: #fff; stroke-width: 1; }
.fi rect { fill: #0d99ff; stroke: none; }
.content { flex: 1; min-width: 0; }
.content header { display: flex; align-items: center; gap: 19px; height: 46px; padding-left: 30px; border-bottom: 1px solid #e4e4e4; }
.content header svg { width: 12px; height: 12px; }
.content .off { color: #b5b5b5; }
h1 { font-size: 12px; }
.views { display: flex; padding: 21px 0 21px 32px; color: #999; }
.views button { height: 24px; padding: 0 8px; border-radius: 5px; }
.views .on { background: #f3f3f3; color: #222; font-weight: 500; }
.grid { display: grid; grid-template-columns: repeat(2, 280px); gap: 32px; padding-left: 32px; }
article { overflow: hidden; height: 214px; border: 1px solid #e3e3e3; border-radius: 12px; }
.thumb { width: 100%; height: 156px; stroke: none; border-bottom: 1px solid #e6e6e6; }
article footer { display: flex; align-items: center; gap: 11px; height: 57px; padding: 0 16px; }
article footer div { flex: 1; }
h2 { font-size: 11px; font-weight: 500; line-height: 15px; color: #222; }
article p { color: #999; line-height: 15px; }
article .av { width: 24px; height: 24px; }
</style>
